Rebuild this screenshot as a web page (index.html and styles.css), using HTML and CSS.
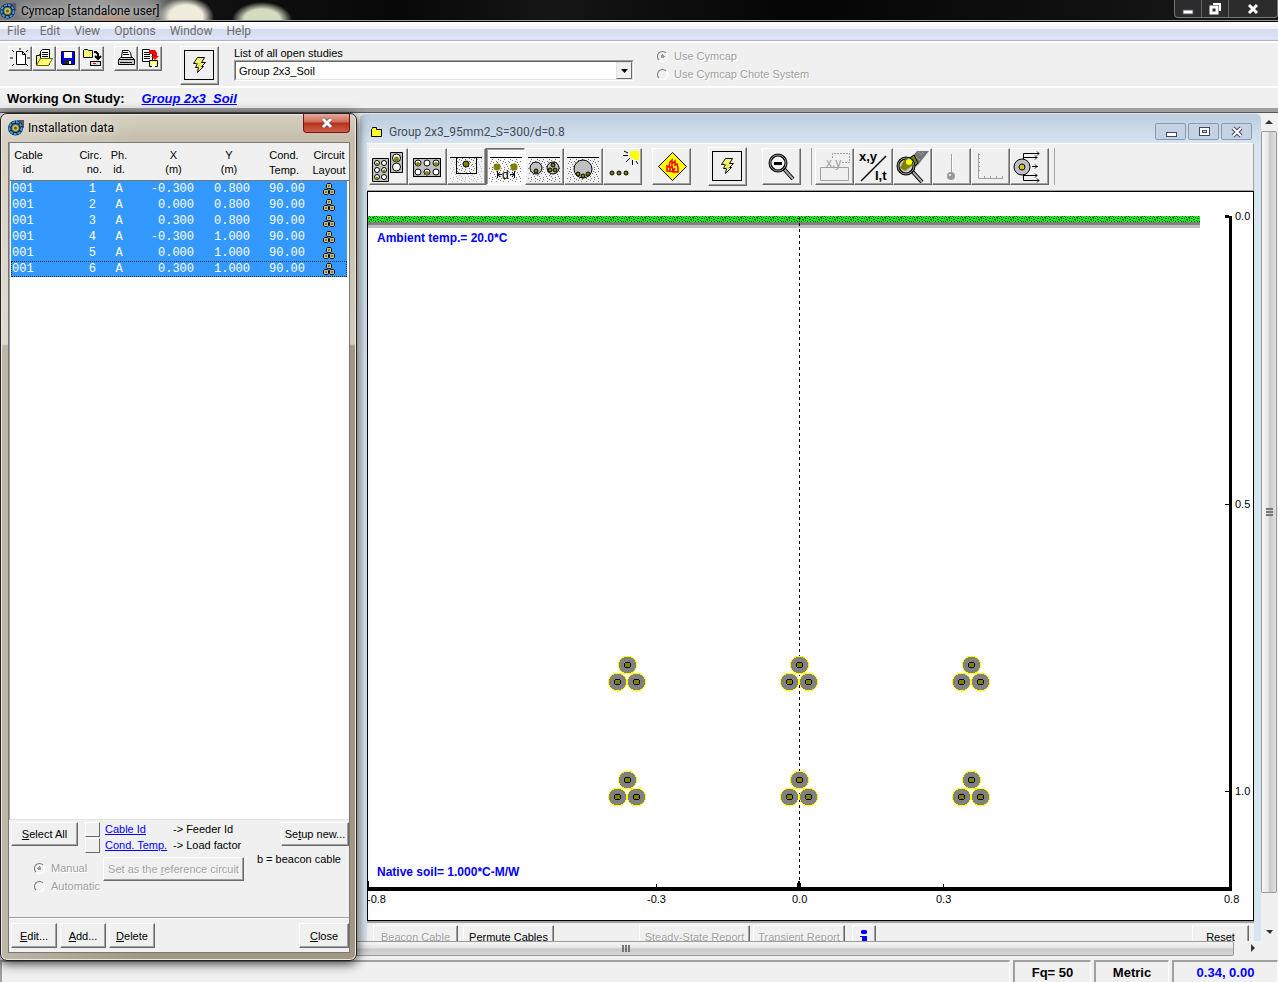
FILE: index.html
```html
<!DOCTYPE html>
<html lang="en">
<head>
<meta charset="utf-8">
<title>Cymcap [standalone user]</title>
<link rel="stylesheet" href="styles.css">
</head>
<body>
<svg class="defs" aria-hidden="true">
  <defs>
    <pattern id="soil" width="12" height="10" patternUnits="userSpaceOnUse"><path fill="#777" d="M1 1h1v1H1zM5 0h1v1H5zM9 2h1v1H9zM3 4h1v1H3zM7 5h1v1H7zM11 6h1v1h-1zM1 7h1v1H1zM5 8h1v1H5zM9 9h1v1H9zM10 3h1v1h-1zM4 2h1v1H4zM6 3h1v1H6zM2 9h1v1H2zM8 7h1v1H8zM0 5h1v1H0zM11 0h1v1h-1z"/></pattern>
    <pattern id="grass" width="16" height="6" patternUnits="userSpaceOnUse"><rect width="16" height="6" fill="#0f0"/><path fill="#002800" d="M1 0h1v1H1zM4 1h2v1H4zM8 0h1v1H8zM11 1h1v1h-1zM14 0h1v1h-1zM0 2h1v1H0zM2 3h2v1H2zM7 2h1v1H7zM9 3h2v1H9zM13 2h2v1h-2zM1 5h1v1H1zM5 4h1v1H5zM7 5h1v1H7zM12 4h1v1h-1zM15 5h1v1h-1zM10 5h1v1h-1zM3 4h1v1H3zM6 0h1v1H6zM13 5h1v1h-1zM9 1h1v1H9zM2 1h1v1H2zM5 2h1v1H5z"/></pattern>
    <pattern id="check" width="2" height="2" patternUnits="userSpaceOnUse"><rect width="2" height="2" fill="#ff0"/><path fill="#fff" d="M0 0h1v1H0zM1 1h1v1H1z"/></pattern>
    <symbol id="app" viewBox="0 0 16 16"><rect x="9" width="7" height="8" fill="#556"/><circle cx="7.500" cy="8" r="7.500" fill="#123"/><circle cx="7.500" cy="8" r="6" fill="none" stroke="#39e" stroke-width="2" stroke-dasharray="3 1"/><circle cx="7.500" cy="8" r="4" fill="#667"/><circle cx="7.500" cy="8" r="3" fill="#cc3"/><circle cx="7.500" cy="8" r="1.500" fill="#553"/></symbol>
    <symbol id="bolt" viewBox="0 0 34 34"><rect x="2.500" y="2.500" width="29" height="29" fill="none" stroke="#000"/><path d="M15.500 9.500h7l-3 5h4l-4 4h2l-6 6 1-5h-3l2-4h-4z" fill="url(#check)" stroke="#000"/><path d="M14 15h5l-3 4h3" fill="none" stroke="#dd0"/></symbol>
    <symbol id="trefoil" viewBox="0 0 12 12"><g fill="#c8c0a0" stroke="#000"><path d="M4.500.5h3l1 1v3l-1 1h-3l-1-1v-3z"/><path d="M1.500 6.500h3l1 1v3l-1 1h-3l-1-1v-3zM7.500 6.500h3l1 1v3l-1 1h-3l-1-1v-3z"/></g><path fill="#808000" d="M5 2h2v2H5zM2 8h2v2H2zM8 8h2v2H8z"/></symbol>
    <g id="cable"><circle r="9" fill="#808080" stroke="#ff0" stroke-width="1"/><circle r="3" fill="#808000" stroke="#000"/></g>
    <g id="cables"><use href="#cable" y="-17"/><use href="#cable" x="-10"/><use href="#cable" x="9"/></g>
  </defs>
</svg>

<header class="titlebar">
  <svg class="appicon" aria-hidden="true"><use href="#app"/></svg>
  <h1>Cymcap [standalone user]</h1>
  <div class="caption">
    <button aria-label="Minimize"><svg width="12" height="12"><rect x="1" y="7" width="10" height="4" fill="#fff" stroke="#556"/></svg></button>
    <button aria-label="Restore"><svg width="12" height="12"><path d="M4 1h7v7" fill="none" stroke="#fff" stroke-width="2"/><rect x="2" y="4" width="6" height="6" fill="none" stroke="#fff" stroke-width="3"/></svg></button>
    <button class="wide" aria-label="Close"><svg width="12" height="12"><path d="M2 2l8 8M10 2l-8 8" stroke="#fff" stroke-width="3"/></svg></button>
  </div>
</header>
<nav class="menu">
  <button>File</button><button>Edit</button><button>View</button><button>Options</button><button>Window</button><button>Help</button>
</nav>
<section class="toolbar">
  <div class="group">
    <button class="tool small" aria-label="New"><svg viewBox="0 0 22 22"><path d="M7.500 4.500h6l3 3v10h-9z" fill="#fff" stroke="#000"/><path d="M13.500 4.500v3h3M3 3l2 2M11 1v2M19 3l-2 2M1 11h3M18 11h3M3 19l2-2M19 19l-2-2" fill="none" stroke="#000"/></svg></button>
    <button class="tool small" aria-label="Open"><svg viewBox="0 0 22 22"><path d="M3.500 17.500v-9h3v-1h10v10z" fill="url(#check)" stroke="#000"/><path d="M7.500 13V4.500l2-2h7V13z" fill="#fff" stroke="#000"/><path d="M9 5.500h6M9 7.500h6M9 9.500h6" stroke="#000"/><path d="M3.500 18.500l4-7h12l-4 7z" fill="#ffff70" stroke="#660"/></svg></button>
    <button class="tool small" aria-label="Save"><svg viewBox="0 0 22 22"><path d="M4.500 4.500h13v13h-12l-1-1z" fill="#00f" stroke="#000"/><path fill="#fff" d="M7 5h8v6H7z"/><path fill="#222" d="M7 13h8v4H7z"/><path fill="#fff" d="M12 14h2v3h-2z"/></svg></button>
    <button class="tool small" aria-label="Save as"><svg viewBox="0 0 22 22"><path d="M2.500 10.500v-7l1-1h3l1 1h4v7z" fill="url(#check)" stroke="#000"/><path d="M13 5h2l2 2v4M14 9l3 3 3-3" fill="none" stroke="#000" stroke-width="2"/><rect x="9.500" y="14.500" width="10" height="4" fill="#ddd" stroke="#000"/><path d="M12 16.500h3" stroke="#f00"/></svg></button>
  </div>
  <div class="group print">
    <button class="tool small" aria-label="Print"><svg viewBox="0 0 22 22"><path d="M6.500 10.500l1-7h6l2 2 1 5z" fill="#fff" stroke="#000"/><path d="M8 5.500h5M8 7.500h6" stroke="#000"/><path d="M3.500 12.500l2-2h12l2 2v5h-16z" fill="#ccc" stroke="#000"/><path d="M4 12.500h15M5 15.500h12" stroke="#000"/></svg></button>
    <button class="tool small" aria-label="Print report"><svg viewBox="0 0 22 22"><path d="M3.500 14.500v-12h7l3 3v9z" fill="#fff" stroke="#000"/><path d="M5 5.500h6M5 7.500h6M5 9.500h6M5 11.500h6" stroke="#000"/><path d="M10.500 19.500v-6h8v6z" fill="#ff6" stroke="#000"/><path d="M13 16h3v4h-3z" fill="#fff"/><path d="M10 3h6l2 3v3h2l-4 4-4-4h2V7h-4z" fill="#f00"/></svg></button>
  </div>
  <button class="tool big" aria-label="Run"><svg viewBox="0 0 34 34"><use href="#bolt"/></svg></button>
  <div class="field">
    <label for="study">List of all open studies</label>
    <div class="combo"><select id="study"><option>Group 2x3_Soil</option></select><svg class="arrow" width="16" height="18" aria-hidden="true"><path d="M4 6h7l-3.500 4z"/></svg></div>
  </div>
  <fieldset class="mode" disabled>
    <label><input type="radio" name="mode" checked>Use Cymcap</label>
    <label><input type="radio" name="mode">Use Cymcap Chote System</label>
  </fieldset>
</section>
<section class="working"><span>Working On Study:</span><a href="#">Group 2x3_Soil</a></section>

<main class="workspace">
  <div class="desk">
    <section class="child">
      <header class="childbar">
        <svg width="12" height="12" aria-hidden="true"><path d="M.5 10.500v-7l1-1v-1h4v2h5v7z" fill="#ffff30" stroke="#000"/></svg>
        <h2>Group 2x3_95mm2_S=300/d=0.8</h2>
        <div class="childcaption">
          <button aria-label="Minimize"><svg width="12" height="12"><rect x="1.500" y="6.500" width="10" height="4" fill="#fff" stroke="#446"/></svg></button>
          <button aria-label="Maximize"><svg width="12" height="12"><rect x="1.500" y="1.500" width="10" height="8" fill="#fff" stroke="#446"/><rect x="4.500" y="4.500" width="4" height="2" fill="#cde" stroke="#446"/></svg></button>
          <button aria-label="Close"><svg width="12" height="12"><path d="M2 2l8 8M10 2l-8 8" stroke="#446" stroke-width="4"/><path d="M2 2l8 8M10 2l-8 8" stroke="#fff" stroke-width="2"/></svg></button>
        </div>
      </header>
      <div class="childtools">
        <div class="group">
          <button class="tool" aria-label="Duct banks"><svg viewBox="0 0 36 34"><g fill="#c0c0c0" stroke="#000"><path d="M2.500 9.500h16v23h-16zM20.500 3.500h12v20h-12z"/><g fill="#fff"><circle cx="7" cy="14" r="2.500"/><circle cx="14" cy="14" r="2.500"/><circle cx="7" cy="21" r="2.500"/><circle cx="14" cy="21" r="2.500"/><circle cx="7" cy="28" r="2.500"/><circle cx="14" cy="28" r="2.500"/><circle cx="26.500" cy="9" r="4"/><circle cx="26.500" cy="18" r="4"/></g></g><g fill="#808000"><circle cx="26.500" cy="10" r="2.500"/><circle cx="7" cy="15" r="1.500"/><circle cx="14" cy="22" r="1.500"/><circle cx="7" cy="29" r="1.500"/></g></svg></button>
          <button class="tool" aria-label="Duct bank"><svg viewBox="0 0 36 34"><rect x="4.500" y="9.500" width="27" height="18" fill="#c0c0c0" stroke="#000"/><g fill="#fff" stroke="#000"><circle cx="9" cy="14" r="3"/><circle cx="18" cy="14" r="3"/><circle cx="27" cy="14" r="3"/><circle cx="9" cy="23" r="3"/><circle cx="18" cy="23" r="3"/><circle cx="27" cy="23" r="3"/></g><g fill="#808000"><circle cx="9" cy="15" r="2"/><circle cx="27" cy="15" r="2"/><circle cx="18" cy="24" r="2"/></g></svg></button>
          <button class="tool" aria-label="Backfill"><svg viewBox="0 0 36 34"><path d="M2 9h32v24H2z" fill="url(#soil)" opacity=".45"/><rect x="8.500" y="8.500" width="20" height="16" fill="#eee" stroke="#000"/><rect x="9" y="9" width="19" height="15" fill="url(#soil)"/><path d="M2 8.500h32" stroke="#000"/><circle cx="18" cy="15" r="3" fill="#808000" stroke="#000"/></svg></button>
          <button class="tool pressed" aria-label="Directly buried"><svg viewBox="0 0 36 34"><path d="M2 10h32v23H2z" fill="url(#soil)"/><path d="M3 8.500h32" stroke="#000"/><circle cx="10" cy="18" r="3.500" fill="#808000"/><circle cx="27" cy="18" r="3.500" fill="#808000"/><path d="M10.500 22v7M27.500 22v7M11 25.500h4M23 25.500h4M13 23l-2 2.500 2 2.500M25 23l2 2.500-2 2.500" fill="none" stroke="#000"/><text x="15" y="30" class="icontext">d</text></svg></button>
          <button class="tool" aria-label="Pipes"><svg viewBox="0 0 36 34"><path d="M2 10h32v23H2z" fill="url(#soil)"/><path d="M2 8.500h32" stroke="#000"/><g fill="#c0c0c0" stroke="#000"><circle cx="10" cy="19" r="6"/><circle cx="27" cy="19" r="6"/><g fill="#808000"><circle cx="10" cy="22" r="2"/><circle cx="27" cy="16" r="2"/><circle cx="24" cy="21" r="2"/><circle cx="29" cy="21" r="2"/></g></g></svg></button>
          <button class="tool" aria-label="Tunnel"><svg viewBox="0 0 36 34"><path d="M2 10h32v23H2z" fill="url(#soil)"/><path d="M2 8.500h32" stroke="#000"/><g fill="#c0c0c0" stroke="#000"><circle cx="18" cy="20" r="9"/><g fill="#808000"><circle cx="13" cy="25" r="2"/><circle cx="18" cy="27" r="2"/><circle cx="23" cy="25" r="2"/></g></g></svg></button>
          <button class="tool" aria-label="Cables in air"><svg viewBox="0 0 36 34"><path d="M26 2h9v9h-5l-4-4z" fill="#ff0"/><path d="M19 6.500h5M22 13l4-4M28.500 16v-5M34 15l-2-3M20 2l4 2" stroke="#000"/><g fill="#808000" stroke="#000"><circle cx="8" cy="24" r="2"/><circle cx="15" cy="24" r="2"/><circle cx="22" cy="24" r="2"/></g></svg></button>
        </div>
        <button class="tool fire" aria-label="Heat source"><svg viewBox="0 0 36 34"><path d="M19.500 3.500l14 14-14 14-14-14z" fill="#ff0" stroke="#000"/><path d="M14 22v-5l2 1 1-5 2-2v4l3-3v4l2-1 1 4v4zM17 22v-3l2-2 1 5 2-3" fill="none" stroke="#f00" stroke-width="1.500"/></svg></button>
        <button class="tool big" aria-label="Solve"><svg viewBox="0 0 34 34"><use href="#bolt"/></svg></button>
        <button class="tool lens" aria-label="Zoom out"><svg viewBox="0 0 36 34"><path d="M21 20l9 10" stroke="#000" stroke-width="4"/><path d="M21 20l9 10" stroke="#aaa" stroke-width="2"/><circle cx="15" cy="14" r="8" fill="#f4f4f4" stroke="#000" stroke-width="3"/><circle cx="15" cy="14" r="8" fill="none" stroke="#999"/><path d="M11 14.500h8" stroke="#000" stroke-width="3"/></svg></button>
        <div class="group sep">
          <button class="tool" disabled aria-label="Coordinates"><svg viewBox="0 0 36 34"><g fill="none" stroke="#a0a0a0"><path d="M16.500 9V4.500h17v9h-8" stroke-dasharray="2 1"/><path d="M4.500 18.500h28v13h-28z"/></g><text x="10" y="18" class="icontext grey">x,y</text></svg></button>
          <button class="tool" aria-label="Position or current"><svg viewBox="0 0 36 34"><path d="M6 32L31 7" stroke="#000" stroke-width="1.500"/><text x="4" y="12" class="icontext bold">x,y</text><text x="20" y="31" class="icontext bold">I,t</text></svg></button>
          <button class="tool" aria-label="View cable"><svg viewBox="0 0 36 34"><path d="M16 10l7-8h12L24 16l-4 3z" fill="#777"/><path d="M24 3l4 3M28 3l2 2M22 8l4 3" stroke="#bbb" stroke-dasharray="1 1"/><path d="M14 10l6-4 4 8-5 5z" fill="#808000" stroke="#000"/><path d="M18 22l10 11" stroke="#000" stroke-width="4"/><path d="M18 22l10 11" stroke="#aaa" stroke-width="2"/><circle cx="12" cy="17" r="8" fill="#ccc" stroke="#000" stroke-width="3"/><circle cx="12" cy="17" r="8" fill="none" stroke="#999"/><path d="M6 19l4-8 7-1 2 6-8 6z" fill="#808000"/><circle cx="15" cy="13" r="3" fill="#ff0"/></svg></button>
          <button class="tool" disabled aria-label="Temperature"><svg viewBox="0 0 36 34"><path d="M18.500 5v19" stroke="#a0a0a0"/><path d="M19.500 6v18" stroke="#fff"/><circle cx="18" cy="27" r="4" fill="#999"/><circle cx="17" cy="26" r="1" fill="#fff"/></svg></button>
          <button class="tool" disabled aria-label="Graph"><svg viewBox="0 0 36 34"><path d="M6.500 4v25.500H31M6 5.500h2M6 9.500h2M6 13.500h2M6 17.500h2M6 21.500h2M12.500 27v2M18.500 27v2M24.500 27v2M30.500 27v2" fill="none" stroke="#a0a0a0"/></svg></button>
          <button class="tool" aria-label="Connections"><svg viewBox="0 0 36 34"><circle cx="11" cy="18" r="8" fill="#c0c0c0" stroke="#000"/><circle cx="11" cy="18" r="3" fill="#cc0" stroke="#000"/><path d="M12.500 10V4.500H28M12 8.500h14M21 17.500h6M12 26.500h14M12.500 25v6.500H28M26 2.500l2 2-2 2M24 6.500l2 2-2 2M24 15.500l2 2-2 2M24 24.500l2 2-2 2M26 29.500l2 2-2 2" fill="none" stroke="#000"/></svg></button>
        </div>
      </div>
      <div class="plot">
        <svg viewBox="368 192 885 728" role="img" aria-label="Cable installation cross-section">
          <g shape-rendering="crispEdges">
            <rect x="368" y="222" width="832" height="3" fill="#808080"/>
            <rect x="368" y="225" width="832" height="3" fill="#c0c0c0"/>
            <rect x="368" y="216" width="832" height="6" fill="url(#grass)"/>
            <path d="M799.500 217v670" stroke="#000" stroke-dasharray="3 3"/>
            <path d="M368 887h864v4H368zM1229 216h3v675h-3zM1225 215h4v3h-4zM1225 504h4v1h-4zM1225 791h4v1h-4zM656 884h1v3h-1zM797 883h4v4h-4zM798 881h2v2h-2zM943 884h1v3h-1zM368 881h1v6h-1z"/>
            <use href="#cables" x="627.500" y="682"/><use href="#cables" x="799.500" y="682"/><use href="#cables" x="971.500" y="682"/>
            <use href="#cables" x="627.500" y="797"/><use href="#cables" x="799.500" y="797"/><use href="#cables" x="971.500" y="797"/>
          </g>
          <g class="soiltext"><text x="377" y="242">Ambient temp.= 20.0*C</text><text x="377" y="876">Native soil= 1.000*C-M/W</text></g>
          <g class="axis"><text x="1235" y="220">0.0</text><text x="1235" y="508">0.5</text><text x="1235" y="795">1.0</text><text x="367" y="903">-0.8</text><text x="647" y="903">-0.3</text><text x="792" y="903">0.0</text><text x="936" y="903">0.3</text><text x="1224" y="903">0.8</text></g>
        </svg>
      </div>
      <footer class="childfoot">
        <button disabled>Beacon Cable</button><button>Permute Cables</button>
        <button class="steady" disabled>Steady-State Report</button><button disabled>Transient Report</button>
        <button class="info" aria-label="Information"><svg width="8" height="16"><path fill="#00f" d="M2 1h4l1 1v2l-1 1H2L1 4V2zM0 7h7v8H2V8H0z"/></svg></button>
        <button class="reset">Reset</button>
      </footer>
    </section>
    <div class="vscroll" aria-hidden="true"><svg width="16" height="18"><path d="M4 11l4-4 4 4z" fill="#333"/></svg><div class="vthumb"><i></i><i></i><i></i></div><svg class="down" width="16" height="18"><path d="M5 7h7l-3 4z" fill="#333"/></svg></div>
  </div>
  <div class="hscroll" aria-hidden="true"><div class="hthumb"><i></i><i></i><i></i></div><svg width="8" height="12"><path d="M1 3l4 4-4 4z" fill="#333"/></svg></div>
</main>

<footer class="status"><div class="message"></div><div class="fq">Fq= 50</div><div class="unit">Metric</div><div class="coord">0.34, 0.00</div></footer>

<section class="dialog" role="dialog" aria-labelledby="dlg">
  <header class="dialogbar">
    <svg class="appicon" aria-hidden="true"><use href="#app"/></svg>
    <h2 id="dlg">Installation data</h2>
    <button class="close" aria-label="Close window"><svg width="12" height="12"><path d="M2 2l8 8M10 2l-8 8" stroke="#544" stroke-width="4"/><path d="M2 2l8 8M10 2l-8 8" stroke="#fff" stroke-width="3"/></svg></button>
  </header>
  <div class="client">
    <div class="list">
      <table>
        <colgroup><col class="c1"><col class="c2"><col class="c3"><col class="c4"><col class="c5"><col class="c6"><col class="c7"></colgroup>
        <thead><tr><th>Cable<br>id.</th><th>Circ.<br>no.</th><th>Ph.<br>id.</th><th>X<br>(m)</th><th>Y<br>(m)</th><th class="tall">Cond.<br>Temp.</th><th class="tall">Circuit<br>Layout</th></tr></thead>
        <tbody>
          <tr><td>001</td><td>1</td><td>A</td><td>-0.300</td><td>0.800</td><td>90.00</td><td><svg><use href="#trefoil"/></svg></td></tr>
          <tr><td>001</td><td>2</td><td>A</td><td>0.000</td><td>0.800</td><td>90.00</td><td><svg><use href="#trefoil"/></svg></td></tr>
          <tr><td>001</td><td>3</td><td>A</td><td>0.300</td><td>0.800</td><td>90.00</td><td><svg><use href="#trefoil"/></svg></td></tr>
          <tr><td>001</td><td>4</td><td>A</td><td>-0.300</td><td>1.000</td><td>90.00</td><td><svg><use href="#trefoil"/></svg></td></tr>
          <tr><td>001</td><td>5</td><td>A</td><td>0.000</td><td>1.000</td><td>90.00</td><td><svg><use href="#trefoil"/></svg></td></tr>
          <tr class="focus"><td>001</td><td>6</td><td>A</td><td>0.300</td><td>1.000</td><td>90.00</td><td><svg><use href="#trefoil"/></svg></td></tr>
        </tbody>
      </table>
    </div>
    <div class="options">
      <div class="left">
        <div class="row">
          <button class="push select"><u>S</u>elect All</button>
          <div class="maps">
            <button class="mini" aria-label="Use cable id"></button><a href="#">Cable Id</a><span>-&gt; Feeder Id</span>
            <button class="mini" aria-label="Use conductor temperature"></button><a href="#">Cond. Temp.</a><span>-&gt; Load factor</span>
          </div>
        </div>
        <fieldset class="refs" disabled>
          <div class="radios">
            <label><input type="radio" name="ref" checked>Manual</label>
            <label><input type="radio" name="ref">Automatic</label>
          </div>
          <button class="push">Set as the <u>r</u>eference circuit</button>
        </fieldset>
      </div>
      <div class="right"><button class="push">Se<u>t</u>up new...</button><span>b = beacon cable</span></div>
    </div>
    <div class="actions"><button class="push"><u>E</u>dit...</button><button class="push"><u>A</u>dd...</button><button class="push"><u>D</u>elete</button><button class="push end"><u>C</u>lose</button></div>
  </div>
</section>
</body>
</html>
```
FILE: styles.css
```css
* { box-sizing: border-box; }
body { margin: 0; height: 100vh; display: flex; flex-direction: column; overflow: hidden; position: relative; background: #f0f0f0; color: #000; font: 11px/14px "Liberation Sans", Arial, sans-serif; }
h1, h2 { margin: 0; font: 12px/18px Roboto, "Open Sans", sans-serif; white-space: nowrap; }
button { padding: 0; border: 0; background: none; font: inherit; color: inherit; white-space: nowrap; }
fieldset { margin: 0; padding: 0; border: 0; min-width: 0; }
a { color: #00f; }
svg { display: block; flex: none; }
.defs { position: absolute; width: 0; height: 0; }
.appicon { width: 16px; height: 16px; }
.group { display: flex; }

.titlebar { flex: none; height: 21px; display: flex; align-items: flex-start; border-bottom: 1px solid #999; background: radial-gradient(ellipse 28px 20px at 186px 17px, #f0ecdc 60%, transparent), radial-gradient(ellipse 30px 18px at 262px 20px, #d4dcc0 60%, transparent), radial-gradient(ellipse 30px 10px at 112px 20px, #c09070, transparent), linear-gradient(90deg, #777 0, #999 100px, #888 150px, #111 200px, #080808 400px, #151515 550px, #050505 800px, #181818); }
.titlebar .appicon { margin: 3px 5px 0 0; }
.titlebar h1 { margin-top: 2px; text-shadow: 0 0 8px #ccc, 0 0 5px #ccc; }
.caption { margin-left: auto; display: flex; height: 18px; border: 1px solid #777; border-top: 0; border-radius: 0 0 4px 4px; background: #2c2c2c; }
.caption button { width: 27px; display: flex; align-items: center; justify-content: center; border-right: 1px solid #666; }
.caption .wide { width: 48px; border-right: 0; }

.menu { flex: none; height: 22px; display: flex; gap: 14px; padding-left: 7px; border-top: 1px solid #000; border-bottom: 2px solid #fff; background: linear-gradient(#fff, #eef1f8 35%, #d5dcef 36%, #dfe4f5 92%, #a9b4cd 93%); color: #6d6d6d; font: 12px/19px Roboto, "Open Sans", sans-serif; }
.toolbar { flex: none; height: 45px; display: flex; align-items: flex-start; padding: 3px 8px 0; border-bottom: 2px solid #fff; }
.tool { width: 39px; height: 37px; display: flex; align-items: center; justify-content: center; border: 1px solid; border-color: #fff #696969 #696969 #fff; box-shadow: inset -1px -1px #a0a0a0; background: #f0f0f0; }
.tool svg { width: 36px; height: 34px; margin: 0 1px 1px 0; }
.small { width: 24px; height: 25px; }
.small svg { width: 22px; height: 22px; margin: 0 0 1px; }
.print { margin-left: 10px; }
.big { width: 39px; height: 39px; }
.big svg { width: 34px; height: 34px; }
.toolbar .big { margin-left: 18px; }
.pressed { border-color: #696969 #fff #fff #696969; box-shadow: inset 1px 1px #a0a0a0; background: #fafafa; }
.field { width: 400px; margin-left: 15px; }
.field label { display: block; height: 14px; }
.combo { position: relative; height: 21px; border: 1px solid; border-color: #a0a0a0 #fff #fff #a0a0a0; }
.combo select { appearance: none; width: 100%; height: 19px; padding: 0 0 0 3px; border: 1px solid; border-color: #696969 #e3e3e3 #e3e3e3 #696969; border-radius: 0; background: #fff; color: #000; font: inherit; }
.arrow { position: absolute; right: 1px; top: 1px; height: 17px; border: 1px solid; border-color: #e3e3e3 #696969 #696969 #e3e3e3; background: #f0f0f0; pointer-events: none; }
.mode { margin-left: 23px; padding-top: 1px; }
.mode label, .radios label { display: flex; align-items: center; gap: 6px; height: 18px; color: #a0a0a0; text-shadow: 1px 1px #fff; }
input[type="radio"] { appearance: none; width: 11px; height: 11px; margin: 0; border: 1px solid; border-color: #777 #fff #fff #777; border-radius: 50%; background: #f0f0f0; }
input[type="radio"]:checked { background: radial-gradient(circle, #999 2px, transparent 2px); }
.working { flex: none; height: 20px; display: flex; gap: 17px; padding-left: 7px; font-size: 13px; font-weight: bold; line-height: 21px; }
.working a { font-style: italic; }

.workspace { flex: 1; min-height: 0; display: flex; flex-direction: column; padding-top: 5px; background: linear-gradient(#a0a0a0 4px, #555 4px, #555 5px, #f0f0f0 5px); }
.desk { flex: 1; min-height: 0; display: flex; }
.child { flex: 1; min-width: 0; display: flex; flex-direction: column; margin-left: 360px; padding: 0 7px; border-top: 1px solid #dfe9f3; border-radius: 6px 6px 0 0; background: linear-gradient(#bccddd, #d7e4f2 30px); overflow: hidden; }
.childbar { flex: none; height: 29px; display: flex; align-items: center; padding: 6px 2px 0 4px; }
.childbar h2 { margin-left: 6px; color: #444c58; }
.childcaption { margin-left: auto; display: flex; gap: 2px; }
.childcaption button { width: 31px; height: 17px; display: flex; align-items: center; justify-content: center; border: 1px solid #8a9ab4; border-radius: 2px; background: #c4d3e4; }
.childtools { flex: none; height: 48px; display: flex; align-items: center; padding: 0 2px 1px; border-top: 1px solid #fff; border-right: 1px solid #a0a0a0; border-bottom: 1px solid #a0a0a0; background: #f0f0f0; }
.fire { margin-left: 10px; }
.childtools .big { margin: 0 15px 0 17px; }
.sep { margin-left: 10px; padding: 0 5px 0 3px; border-left: 1px solid #a0a0a0; border-right: 1px solid #a0a0a0; }
.icontext { font: 12px "Liberation Sans", sans-serif; }
.bold { font-size: 13px; font-weight: bold; }
.grey { fill: #a0a0a0; }
.plot { flex: 1; min-height: 0; border: 1px solid #000; background: #fff; }
.plot svg { width: 100%; height: 100%; }
.soiltext { fill: #00f; font: bold 12px "Liberation Sans", sans-serif; }
.axis { font: 11px "Liberation Sans", sans-serif; }
.childfoot { flex: none; height: 20px; display: flex; align-items: flex-start; padding: 2px 5px 0 6px; border-top: 2px solid #a0a0a0; background: #f0f0f0; overflow: hidden; }
.childfoot button { height: 24px; width: 85px; margin-right: 5px; border: 1px solid; border-color: #fff #696969 #696969 #fff; box-shadow: inset -1px -1px #a0a0a0; }
.childfoot button:nth-child(2) { width: 91px; }
.childfoot button:disabled, .push:disabled { color: #a0a0a0; text-shadow: 1px 1px #fff; }
.childfoot .steady { width: 111px; margin: 0 3px 0 80px; }
.childfoot .steady + button { width: 92px; margin-right: 7px; }
.childfoot .info { width: 24px; padding-left: 7px; }
.childfoot .reset { width: 57px; margin: 0 0 0 auto; }
.vscroll { width: 17px; display: flex; flex-direction: column; background: #f0f0f0; }
.vthumb { flex: 1; display: flex; flex-direction: column; align-items: center; justify-content: center; gap: 1px; margin: 0 1px 0 0; border: 1px solid #999; border-radius: 2px; background: linear-gradient(90deg, #f8f8f8, #e4e4e4 45%, #c8c8cc 55%, #e0e0e0); }
.vthumb i { width: 7px; height: 2px; background: #777; }
.down { margin-top: 30px; }
.hscroll { flex: none; height: 17px; display: flex; align-items: flex-start; padding-right: 20px; background: #f0f0f0; }
.hthumb { flex: 1; height: 15px; display: flex; align-items: center; justify-content: center; gap: 1px; margin-right: 16px; padding-left: 18px; border: 1px solid #999; border-radius: 2px; background: linear-gradient(#f6f6f6, #e4e4e4 45%, #c8c8cc 55%, #d8d8d8); }
.hthumb i { width: 2px; height: 7px; background: #777; }

.status { flex: none; height: 24px; display: flex; gap: 3px; padding-top: 2px; font-size: 13px; font-weight: bold; line-height: 21px; text-align: center; }
.status div { border: 2px solid; border-width: 2px 1px 0 2px; border-color: #a0a0a0 #fff #fff #a0a0a0; }
.message { flex: 1; }
.fq { width: 78px; }
.unit { width: 75px; }
.coord { width: 106px; color: #00f; }

.dialog { position: absolute; left: 0; top: 113px; bottom: 21px; width: 357px; display: flex; flex-direction: column; padding: 0 6px 7px 7px; border: 1px solid #222; border-radius: 7px; background: linear-gradient(90deg, rgba(255,255,255,.3), transparent 40%), linear-gradient(#d6d0c2, #c6beab 25px, #d2ccbf 230px, #a19883 232px, #a19883); box-shadow: inset 0 0 0 1px #eee8dd, 0 2px 12px rgba(0,0,0,.85); }
.dialogbar { flex: none; height: 28px; display: flex; align-items: flex-start; }
.dialogbar .appicon { margin-top: 6px; }
.dialogbar h2 { margin: 5px 0 0 4px; text-shadow: 0 0 6px #fff; }
.close { width: 47px; height: 19px; display: flex; align-items: center; justify-content: center; margin-left: auto; border: 1px solid #712; border-top: 0; border-radius: 0 0 4px 4px; background: linear-gradient(#e6a99c, #d06a55 45%, #b5301c 50%, #cf6044); }
.client { flex: 1; min-height: 0; display: flex; flex-direction: column; border: 1px solid #777; background: #f0f0f0; }
.list { flex: 1; min-height: 0; padding: 0 2px 0 1px; background: linear-gradient(#f0f0f0 37px, #777 37px, #777 38px, #fff 38px); border-left: 1px solid #a0a0a0; border-bottom: 1px solid #e3e3e3; }
table { width: 100%; table-layout: fixed; border-collapse: collapse; }
th { height: 38px; padding: 5px 0 0; font-weight: normal; line-height: 14px; text-align: center; vertical-align: top; }
.tall { line-height: 15px; }
td { height: 16px; padding: 0; background: #39f; color: #fff; font: 12px/16px "Liberation Mono", monospace; text-align: right; }
.c1 { width: 65px; } .c2 { width: 30px; } .c3 { width: 40px; } .c4 { width: 55px; } .c5 { width: 56px; } .c6 { width: 54px; }
th:nth-child(1) { padding-right: 30px; }
td:nth-child(1) { text-align: left; padding-left: 1px; }
th:nth-child(2) { text-align: right; padding-right: 4px; }
td:nth-child(2) { padding-right: 10px; }
th:nth-child(3), td:nth-child(3) { text-align: center; padding-right: 14px; }
td:nth-child(4), td:nth-child(5) { padding-right: 7px; }
td:nth-child(6) { padding-right: 6px; }
td svg { width: 12px; height: 12px; margin: 0 auto; }
.focus { outline: 1px dotted #103050; outline-offset: -1px; }
.options { flex: none; height: 98px; display: flex; justify-content: space-between; padding: 2px 0 0 2px; border-bottom: 1px solid #a0a0a0; }
.push { height: 24px; border: 1px solid; border-color: #fff #696969 #696969 #fff; box-shadow: inset -1px -1px #a0a0a0; }
.row { display: flex; gap: 7px; }
.select { width: 67px; }
.maps { display: grid; grid-template-columns: 15px 63px auto; column-gap: 5px; grid-auto-rows: 16px; }
.mini { height: 15px; border: 1px solid; border-color: #fff #696969 #696969 #fff; }
.refs { display: flex; margin-top: 3px; padding-left: 23px; }
.radios { width: 69px; padding-top: 2px; }
.refs .push { width: 141px; }
.right { display: flex; flex-direction: column; align-items: flex-end; gap: 6px; }
.right .push { width: 68px; }
.right span { padding-right: 8px; }
.actions { flex: none; height: 34px; display: flex; align-items: flex-start; gap: 3px; padding: 4px 0 0 2px; border-top: 1px solid #fff; }
.actions .push { width: 46px; height: 25px; }
.actions .end { width: 50px; margin-left: auto; }
```
